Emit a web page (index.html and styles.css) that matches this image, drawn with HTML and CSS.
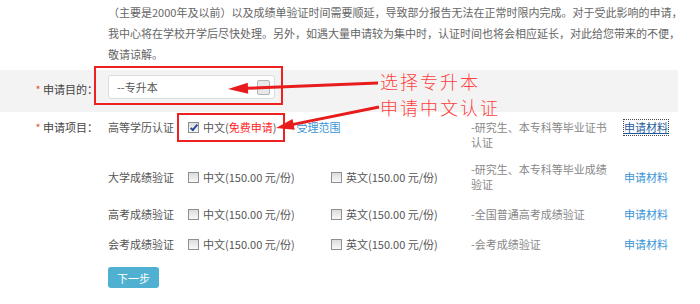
FILE: index.html
```html
<!DOCTYPE html>
<html lang="zh-CN">
<head>
    <meta charset="UTF-8">
    <title>申请认证</title>
    <link rel="stylesheet" href="styles.css">
</head>
<body>
    <p class="notice">（主要是2000年及以前）以及成绩单验证时间需要顺延，导致部分报告无法在正常时限内完成。对于受此影响的申请，<br>我中心将在学校开学后尽快处理。另外，如遇大量申请较为集中时，认证时间也将会相应延长，对此给您带来的不便，<br>敬请谅解。</p>

    <div class="form-row purpose">
        <div class="label"><span class="star">*</span> 申请目的：</div>
        <div class="select">--专升本<span class="select-btn"></span></div>
    </div>

    <div class="form-row items">
        <div class="label"><span class="star">*</span> 申请项目：</div>
        <div class="item-list">
            <div class="item first">
                <span class="item-name">高等学历认证</span>
                <span class="opt wide"><i class="cb checked"></i>中文(<em>免费申请</em>)<a class="scope" href="#">受理范围</a></span>
                <span class="desc">-研究生、本专科等毕业证书认证</span>
                <a class="link focused" href="#">申请材料</a>
            </div>
            <div class="item">
                <span class="item-name">大学成绩验证</span>
                <span class="opt"><i class="cb"></i>中文(150.00 元/份)</span>
                <span class="opt en"><i class="cb"></i>英文(150.00 元/份)</span>
                <span class="desc">-研究生、本专科等毕业成绩验证</span>
                <a class="link" href="#">申请材料</a>
            </div>
            <div class="item">
                <span class="item-name">高考成绩验证</span>
                <span class="opt"><i class="cb"></i>中文(150.00 元/份)</span>
                <span class="opt en"><i class="cb"></i>英文(150.00 元/份)</span>
                <span class="desc">-全国普通高考成绩验证</span>
                <a class="link" href="#">申请材料</a>
            </div>
            <div class="item">
                <span class="item-name">会考成绩验证</span>
                <span class="opt"><i class="cb"></i>中文(150.00 元/份)</span>
                <span class="opt en"><i class="cb"></i>英文(150.00 元/份)</span>
                <span class="desc">-会考成绩验证</span>
                <a class="link" href="#">申请材料</a>
            </div>
        </div>
    </div>

    <button class="btn-next">下一步</button>

    <!-- annotations drawn over the screenshot -->
    <div class="mark-box box-purpose"></div>
    <div class="mark-box box-zh"></div>
    <svg class="arrows" width="700" height="304" viewBox="0 0 700 304">
        <line x1="378" y1="83" x2="246" y2="88.3" stroke="#e81c1c" stroke-width="3"/>
        <polygon points="228,89 248.2,93.7 247.8,82.7" fill="#e81c1c"/>
        <line x1="379" y1="107" x2="292" y2="124.6" stroke="#e81c1c" stroke-width="3"/>
        <polygon points="276,128 294.7,129.8 292.5,119" fill="#e81c1c"/>
    </svg>
    <div class="mark-text">选择专升本<br>申请中文认证</div>
</body>
</html>
```

FILE: styles.css
```css
body {
    margin: 0;
    font-family: "Noto Sans CJK SC", "Noto Sans", sans-serif;
    font-size: 11px;
    color: #666;
    background: #fff;
    position: relative;
    height: 304px;
    overflow: hidden;
}

.notice {
    margin: 0 0 5px 0;
    padding: 2px 0 0 108px;
    line-height: 21px;
    color: #666;
}

.form-row {
    display: flex;
}

.label {
    width: 98px;
    margin-right: 10px;
    text-align: right;
    color: #444;
    flex: none;
    line-height: 15px;
}

.star {
    color: #e4582c;
}

.purpose {
    width: 678px;
    height: 42px;
    box-sizing: border-box;
    padding-bottom: 4px;
    background: #f3f3f3;
    align-items: center;
}

.select {
    width: 167px;
    height: 24px;
    box-sizing: border-box;
    margin-bottom: 4px;
    padding: 0 4px 0 8px;
    border: 1px solid #dcdcdc;
    border-radius: 3px;
    background: #fff;
    color: #555;
    display: flex;
    align-items: center;
    justify-content: space-between;
}

.select-btn {
    width: 13px;
    height: 15px;
    box-sizing: border-box;
    border: 1px solid #b3b3b3;
    border-radius: 2px;
    background: #e8e8e8;
    position: relative;
}

.select-btn::after {
    content: "";
    position: absolute;
    left: 1px;
    right: 1px;
    top: 6px;
    border-top: 1px solid #b3b3b3;
}

.items {
    padding-top: 8px;
    align-items: flex-start;
}

.item-list {
    display: flex;
    flex-direction: column;
    gap: 15px;
}

.item {
    display: flex;
    align-items: center;
    line-height: 15px;
}

.item.first {
    align-items: flex-start;
    margin-bottom: -3px;
}

.item-name {
    width: 80px;
    color: #555;
    flex: none;
}

.opt {
    width: 143px;
    flex: none;
    display: flex;
    align-items: center;
    color: #555;
}

.opt.en {
    width: 140px;
}

.opt.wide {
    width: 283px;
}

.opt em {
    font-style: normal;
    color: #f22;
}

.cb {
    width: 9px;
    height: 9px;
    border: 1px solid #8f8f8f;
    background: linear-gradient(#dcdcdc, #f9f9f9);
    margin-right: 4px;
    flex: none;
    position: relative;
}

.cb.checked::after {
    content: "";
    position: absolute;
    left: 3px;
    top: 0px;
    width: 2px;
    height: 6px;
    border: solid #2b4a9c;
    border-width: 0 2px 2px 0;
    transform: rotate(40deg);
}

.scope {
    margin-left: 20px;
    color: #3a94d6;
    text-decoration: none;
}

.desc {
    width: 140px;
    flex: none;
    color: #888;
}

.link {
    margin-left: 13px;
    color: #3a94d6;
    text-decoration: none;
}

.link.focused {
    color: #1f5c9c;
    text-decoration: underline;
    outline: 1px dotted #444;
}

.btn-next {
    display: block;
    margin: 15px 0 0 108px;
    width: 51px;
    height: 21px;
    padding: 0;
    border: none;
    border-radius: 3px;
    background: #4fb0d2;
    color: #fff;
    font-family: inherit;
    font-size: 11px;
}

.mark-box {
    position: absolute;
    border: 2px solid #ee2020;
    box-sizing: border-box;
}

.box-purpose {
    left: 94px;
    top: 66px;
    width: 189px;
    height: 39px;
}

.box-zh {
    left: 177px;
    top: 113px;
    width: 108px;
    height: 29px;
}

.arrows {
    position: absolute;
    left: 0;
    top: 0;
    pointer-events: none;
}

.mark-text {
    position: absolute;
    left: 380px;
    top: 68px;
    font-size: 18px;
    letter-spacing: 2px;
    font-weight: 300;
    line-height: 26px;
    color: #ff4040;
}
```
